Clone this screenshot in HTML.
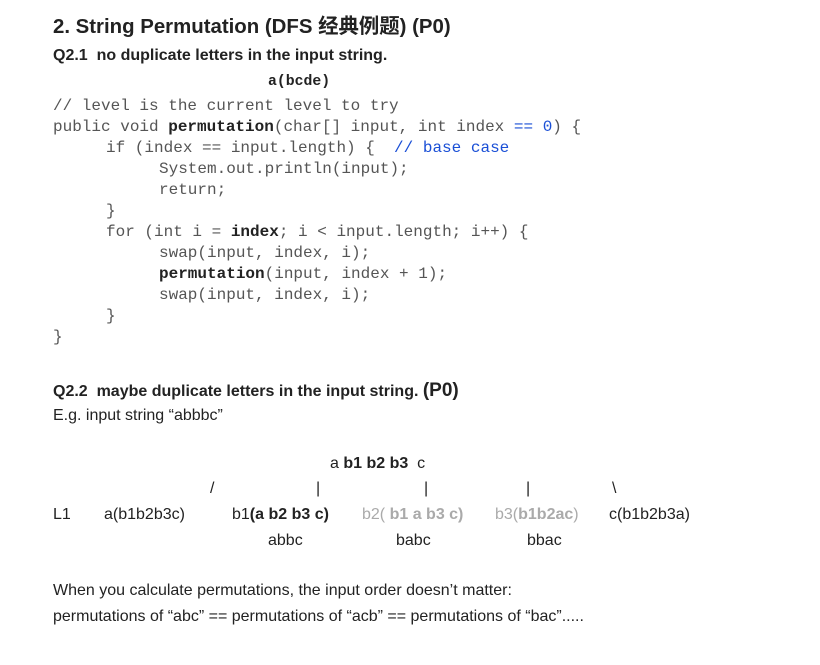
<!DOCTYPE html>
<html><head><meta charset="utf-8"><style>
body{margin:0;width:820px;height:665px;background:#fff;position:relative;font-family:"Liberation Sans","Noto Sans CJK SC",sans-serif;color:#000;overflow:hidden}
.a{position:absolute;white-space:pre;line-height:1}
.m{font-family:"Liberation Mono",monospace;font-size:16px;color:#555}
.s{font-size:16px;color:#222}
.g{color:#aaa}
.bl{color:#1a4fd6}
</style></head><body>
<div class="a" style="left:53px;top:17px;font-size:20.4px;font-weight:bold;color:#222">2. String Permutation (DFS 经典例题) (P0)</div>
<div class="a" style="left:53px;top:48px;font-size:16px;font-weight:bold;color:#222">Q2.1  no duplicate letters in the input string.</div>
<div class="a m" style="left:268px;top:75px;font-size:14.8px;font-weight:bold;color:#222">a(bcde)</div>
<div class="a m" style="left:53px;top:98px">// level is the current level to try</div>
<div class="a m" style="left:53px;top:119px">public void <b style="color:#222">permutation</b>(char[] input, int index <span class="bl">== 0</span>) {</div>
<div class="a m" style="left:106px;top:140px">if (index == input.length) {  <span class="bl">// base case</span></div>
<div class="a m" style="left:159px;top:161px">System.out.println(input);</div>
<div class="a m" style="left:159px;top:182px">return;</div>
<div class="a m" style="left:106px;top:203px">}</div>
<div class="a m" style="left:106px;top:224px">for (int i = <b style="color:#222">index</b>; i &lt; input.length; i++) {</div>
<div class="a m" style="left:159px;top:245px">swap(input, index, i);</div>
<div class="a m" style="left:159px;top:266px"><b style="color:#222">permutation</b>(input, index + 1);</div>
<div class="a m" style="left:159px;top:287px">swap(input, index, i);</div>
<div class="a m" style="left:106px;top:308px">}</div>
<div class="a m" style="left:53px;top:329px">}</div>
<div class="a" style="left:53px;top:381px;font-size:16px;font-weight:bold;color:#222">Q2.2  maybe duplicate letters in the input string. <span style="font-size:19px">(P0)</span></div>
<div class="a s" style="left:53px;top:408px">E.g. input string “abbbc”</div>
<div class="a s" style="left:330px;top:456px">a <b>b1 b2 b3</b>  c</div>
<div class="a s" style="left:210px;top:481px">/</div>
<div class="a s" style="left:316px;top:481px">|</div>
<div class="a s" style="left:424px;top:481px">|</div>
<div class="a s" style="left:526px;top:481px">|</div>
<div class="a s" style="left:612px;top:481px">\</div>
<div class="a s" style="left:53px;top:507px">L1</div>
<div class="a s" style="left:104px;top:507px">a(b1b2b3c)</div>
<div class="a s" style="left:232px;top:507px">b1<b>(a b2 b3 c)</b></div>
<div class="a s g" style="left:362px;top:507px">b2( <b>b1 a b3 c)</b></div>
<div class="a s g" style="left:495px;top:507px">b3(<b>b1b2ac</b>)</div>
<div class="a s" style="left:609px;top:507px">c(b1b2b3a)</div>
<div class="a s" style="left:268px;top:533px">abbc</div>
<div class="a s" style="left:396px;top:533px">babc</div>
<div class="a s" style="left:527px;top:533px">bbac</div>
<div class="a s" style="left:53px;top:583px">When you calculate permutations, the input order doesn’t matter:</div>
<div class="a s" style="left:53px;top:609px">permutations of “abc” == permutations of “acb” == permutations of “bac”.....</div>
</body></html>
